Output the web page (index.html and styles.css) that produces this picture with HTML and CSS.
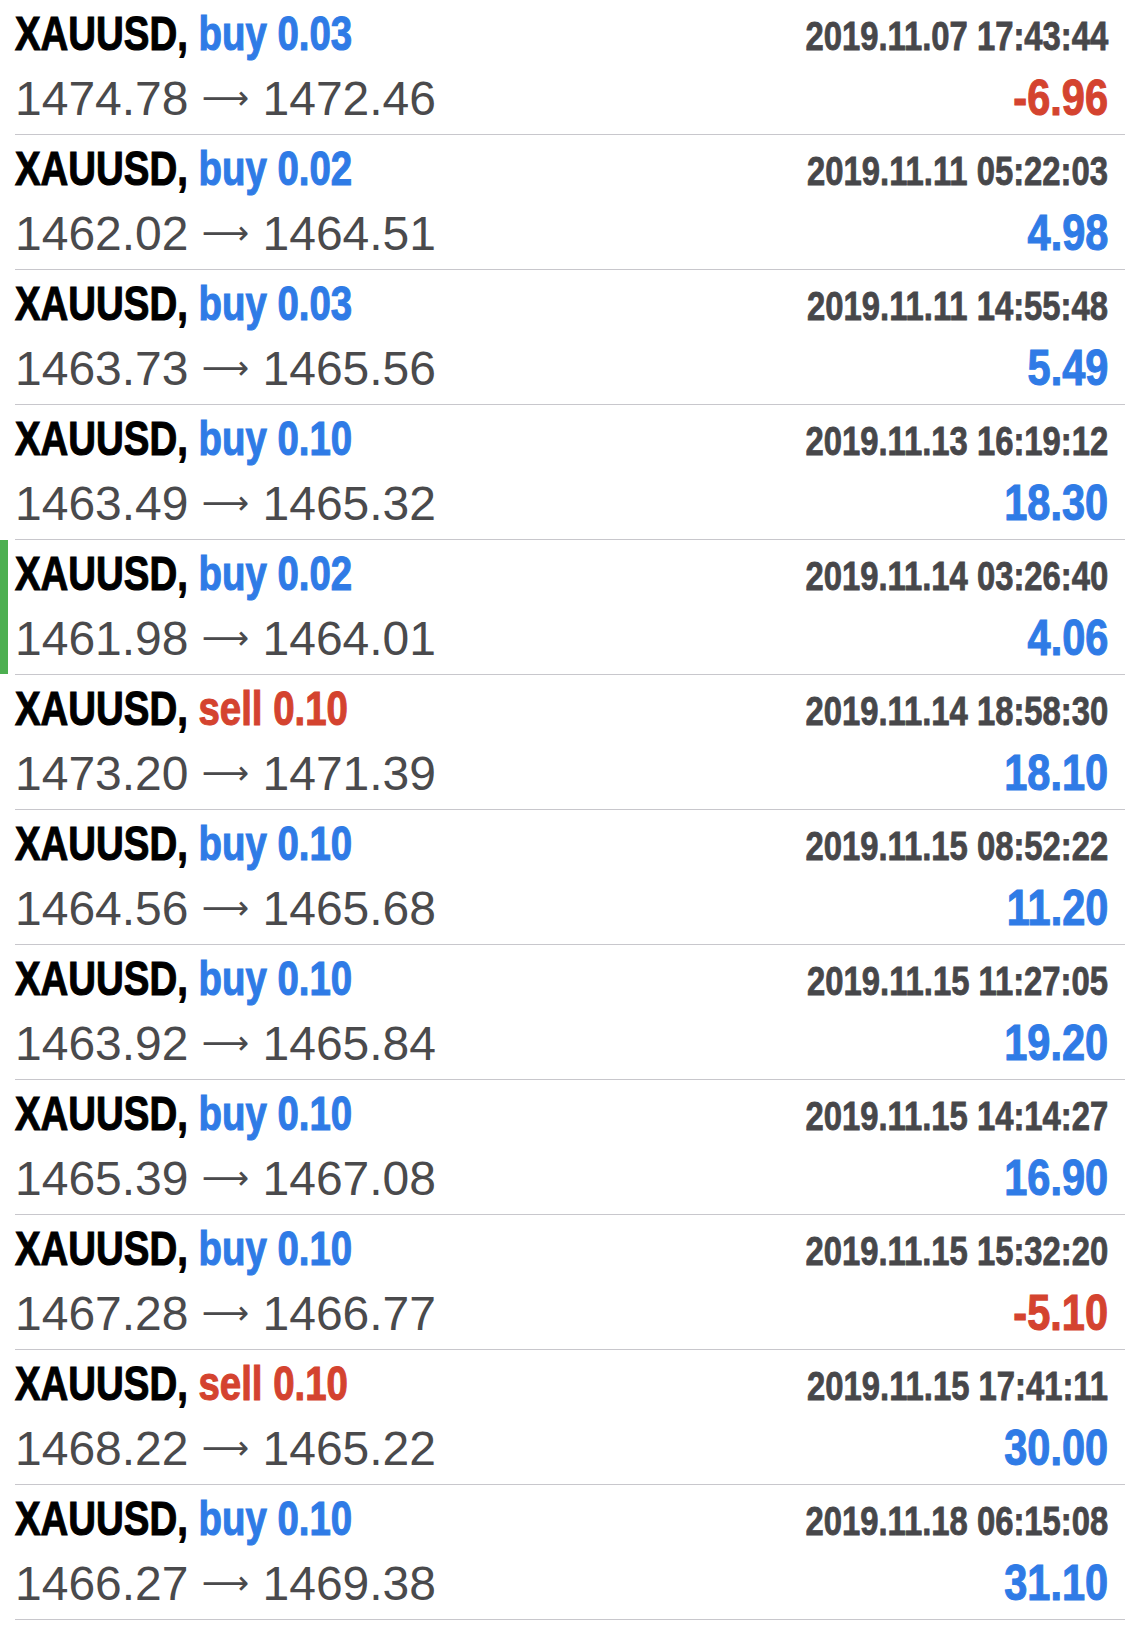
FILE: index.html
```html
<!DOCTYPE html>
<html lang="en">
<head>
    <meta charset="UTF-8">
    <title>History</title>
    <link rel="stylesheet" href="styles.css">
</head>
<body>
<ul class="deals">
    <li class="deal">
        <div class="line">
            <span class="title">XAUUSD, <span class="buy">buy 0.03</span></span>
            <span class="time">2019.11.07 17:43:44</span>
        </div>
        <div class="line">
            <span class="prices">1474.78 <span class="arrow">⟶</span> 1472.46</span>
            <span class="profit loss">-6.96</span>
        </div>
    </li>
    <li class="deal">
        <div class="line">
            <span class="title">XAUUSD, <span class="buy">buy 0.02</span></span>
            <span class="time">2019.11.11 05:22:03</span>
        </div>
        <div class="line">
            <span class="prices">1462.02 <span class="arrow">⟶</span> 1464.51</span>
            <span class="profit">4.98</span>
        </div>
    </li>
    <li class="deal">
        <div class="line">
            <span class="title">XAUUSD, <span class="buy">buy 0.03</span></span>
            <span class="time">2019.11.11 14:55:48</span>
        </div>
        <div class="line">
            <span class="prices">1463.73 <span class="arrow">⟶</span> 1465.56</span>
            <span class="profit">5.49</span>
        </div>
    </li>
    <li class="deal">
        <div class="line">
            <span class="title">XAUUSD, <span class="buy">buy 0.10</span></span>
            <span class="time">2019.11.13 16:19:12</span>
        </div>
        <div class="line">
            <span class="prices">1463.49 <span class="arrow">⟶</span> 1465.32</span>
            <span class="profit">18.30</span>
        </div>
    </li>
    <li class="deal active">
        <div class="line">
            <span class="title">XAUUSD, <span class="buy">buy 0.02</span></span>
            <span class="time">2019.11.14 03:26:40</span>
        </div>
        <div class="line">
            <span class="prices">1461.98 <span class="arrow">⟶</span> 1464.01</span>
            <span class="profit">4.06</span>
        </div>
    </li>
    <li class="deal">
        <div class="line">
            <span class="title">XAUUSD, <span class="sell">sell 0.10</span></span>
            <span class="time">2019.11.14 18:58:30</span>
        </div>
        <div class="line">
            <span class="prices">1473.20 <span class="arrow">⟶</span> 1471.39</span>
            <span class="profit">18.10</span>
        </div>
    </li>
    <li class="deal">
        <div class="line">
            <span class="title">XAUUSD, <span class="buy">buy 0.10</span></span>
            <span class="time">2019.11.15 08:52:22</span>
        </div>
        <div class="line">
            <span class="prices">1464.56 <span class="arrow">⟶</span> 1465.68</span>
            <span class="profit">11.20</span>
        </div>
    </li>
    <li class="deal">
        <div class="line">
            <span class="title">XAUUSD, <span class="buy">buy 0.10</span></span>
            <span class="time">2019.11.15 11:27:05</span>
        </div>
        <div class="line">
            <span class="prices">1463.92 <span class="arrow">⟶</span> 1465.84</span>
            <span class="profit">19.20</span>
        </div>
    </li>
    <li class="deal">
        <div class="line">
            <span class="title">XAUUSD, <span class="buy">buy 0.10</span></span>
            <span class="time">2019.11.15 14:14:27</span>
        </div>
        <div class="line">
            <span class="prices">1465.39 <span class="arrow">⟶</span> 1467.08</span>
            <span class="profit">16.90</span>
        </div>
    </li>
    <li class="deal">
        <div class="line">
            <span class="title">XAUUSD, <span class="buy">buy 0.10</span></span>
            <span class="time">2019.11.15 15:32:20</span>
        </div>
        <div class="line">
            <span class="prices">1467.28 <span class="arrow">⟶</span> 1466.77</span>
            <span class="profit loss">-5.10</span>
        </div>
    </li>
    <li class="deal">
        <div class="line">
            <span class="title">XAUUSD, <span class="sell">sell 0.10</span></span>
            <span class="time">2019.11.15 17:41:11</span>
        </div>
        <div class="line">
            <span class="prices">1468.22 <span class="arrow">⟶</span> 1465.22</span>
            <span class="profit">30.00</span>
        </div>
    </li>
    <li class="deal">
        <div class="line">
            <span class="title">XAUUSD, <span class="buy">buy 0.10</span></span>
            <span class="time">2019.11.18 06:15:08</span>
        </div>
        <div class="line">
            <span class="prices">1466.27 <span class="arrow">⟶</span> 1469.38</span>
            <span class="profit">31.10</span>
        </div>
    </li>
</ul>
</body>
</html>
```

FILE: styles.css
```css
body {
    margin: 0;
    background: #fff;
    font-family: "Liberation Sans", Arial, sans-serif;
}
.deals {
    list-style: none;
    margin: 0;
    padding: 0 0 0 15px;
}
.deal {
    position: relative;
    height: 135px;
    padding: 10px 17px 0 0;
    box-sizing: border-box;
    border-bottom: 1px solid #c8c7cc;
}
.deal.active::before {
    content: "";
    position: absolute;
    left: -15px;
    top: 0;
    bottom: 0;
    width: 8px;
    background: #4caf50;
}
.line {
    display: flex;
    justify-content: space-between;
    align-items: baseline;
    height: 63px;
    line-height: 1;
    white-space: nowrap;
}
/* condensed bold look: Helvetica condensed is not available */
.title, .time, .profit {
    display: inline-block;
    font-weight: bold;
    -webkit-text-stroke: 1.1px currentColor;
}
.title {
    font-size: 48px;
    color: #000;
    transform: scaleX(0.8);
    transform-origin: left;
}
.buy, .profit {
    color: #2f7be6;
}
.sell, .loss {
    color: #d4432f;
}
.time {
    font-size: 40px;
    color: #47474a;
    -webkit-text-stroke-width: 0.8px;
    transform: scaleX(0.82);
    transform-origin: right;
}
.prices {
    font-size: 48px;
    color: #4a4a4c;
}
.arrow {
    font-family: "DejaVu Sans", sans-serif;
    font-size: 33px;
    vertical-align: 6px;
}
.profit {
    font-size: 50px;
    transform: scaleX(0.83);
    transform-origin: right;
}
.profit.loss {
    color: #d4432f;
}
```
